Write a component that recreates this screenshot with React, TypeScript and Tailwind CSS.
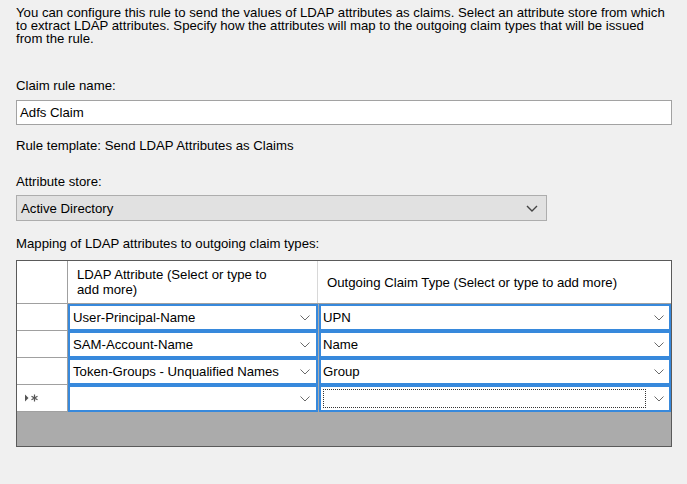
const Chevron = ({ className = "" }: { className?: string }) => (
  <svg width="10" height="6" viewBox="0 0 10 6" className={className}>
    <polyline points="0.5,0.5 5,5 9.5,0.5" fill="none" stroke="#6a6a6a" strokeWidth="1" />
  </svg>
);

const rows = [
  { attr: "User-Principal-Name", claim: "UPN" },
  { attr: "SAM-Account-Name", claim: "Name" },
  { attr: "Token-Groups - Unqualified Names", claim: "Group" },
];

const App = () => {
  return (
    <div className="w-[687px] h-[484px] bg-[#f0f0f0] pl-[16px] pr-[15px] pt-[6px] font-['Liberation_Sans',Arial,sans-serif] text-[13.2px] leading-[13px] text-black overflow-hidden">
      <p>
        You can configure this rule to send the values of LDAP attributes as claims. Select an attribute store from which
        <br />
        to extract LDAP attributes. Specify how the attributes will map to the outgoing claim types that will be issued
        <br />
        from the rule.
      </p>

      <div className="mt-[34px]">Claim rule name:</div>
      <div className="mt-[8px] h-[25px] w-[656px] border border-[#a2a2a2] bg-white px-[3px] flex items-center">
        Adfs Claim
      </div>

      <div className="mt-[14px]">Rule template: Send LDAP Attributes as Claims</div>

      <div className="mt-[23px]">Attribute store:</div>
      <div className="mt-[7px] h-[26px] w-[531px] border border-[#adadad] bg-[#e1e1e1] pl-[4px] pr-[8px] flex items-center justify-between">
        <span>Active Directory</span>
        <svg width="12" height="7" viewBox="0 0 12 7">
          <polyline points="1,1 6,6 11,1" fill="none" stroke="#444" strokeWidth="1.4" />
        </svg>
      </div>

      <div className="mt-[16px]">Mapping of LDAP attributes to outgoing claim types:</div>

      <div className="mt-[10px] h-[187px] w-[656px] border border-[#5a5a5a] bg-[#ababab] flex flex-col">
        <div className="flex h-[43px] bg-white border-b border-[#a0a0a0]">
          <div className="w-[51px] border-r border-[#a0a0a0]" />
          <div className="w-[250px] border-r border-[#d8d8d8] pl-[9px] pt-[6px] leading-[15px]">
            LDAP Attribute (Select or type to
            <br />
            add more)
          </div>
          <div className="flex-1 pl-[9px] flex items-center">Outgoing Claim Type (Select or type to add more)</div>
        </div>

        {[...rows, { attr: "", claim: "" }].map((r, i) => (
          <div key={i} className="flex h-[27px]">
            <div className="w-[51px] bg-white border-r border-b border-[#a0a0a0] flex items-center pl-[8px]">
              {i === 3 && (
                <svg width="14" height="8" viewBox="0 0 14 8">
                  <polygon points="0,0.5 3.5,4 0,7.5" fill="#555" />
                  <path d="M9.5 0.5v7M6.5 2.2l6 3.6M6.5 5.8l6-3.6" stroke="#555" strokeWidth="1.2" />
                </svg>
              )}
            </div>
            <div className="w-[250px] bg-white border-2 border-[#3789dc] flex items-center justify-between pl-[3px] pr-[6px]">
              <span>{r.attr}</span>
              <Chevron />
            </div>
            <div className="flex-1 bg-white border-2 border-[#3789dc] flex items-center justify-between pl-[2px] pr-[5px] ml-px">
              {i === 3 ? (
                <div className="h-[19px] w-[323px] border border-dotted border-[#333]" />
              ) : (
                <span>{r.claim}</span>
              )}
              <Chevron />
            </div>
          </div>
        ))}
      </div>
    </div>
  );
};

export default App;
